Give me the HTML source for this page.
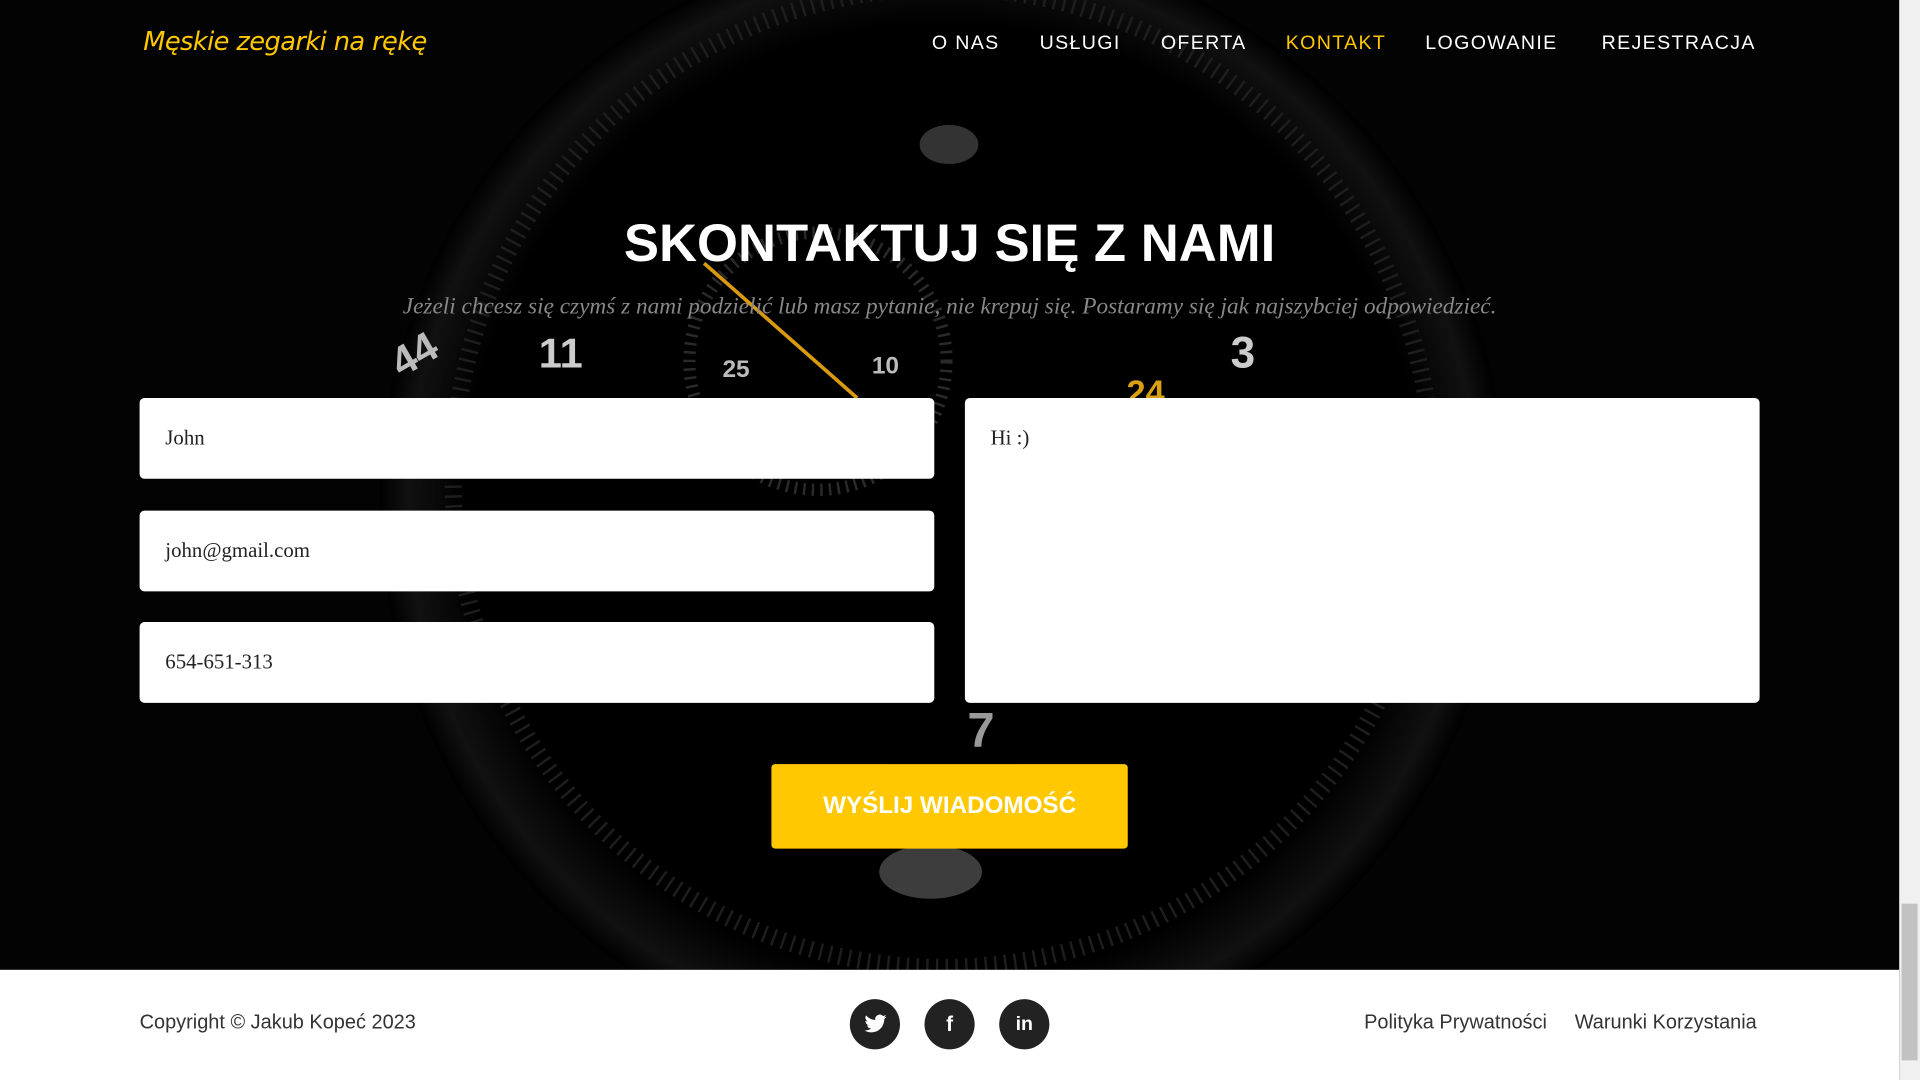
<!DOCTYPE html>
<html><head><meta charset="utf-8">
<style>
html,body{margin:0;padding:0;width:1920px;height:1080px;overflow:hidden;background:#000}
#w{width:1568px;height:882px;transform:scale(1.22449);transform-origin:0 0;position:relative;font-family:"Liberation Sans",sans-serif}
.hero{position:absolute;left:0;top:0;width:1551px;height:792px;background:#030303;overflow:hidden}
.sb{position:absolute;left:1551px;top:0;width:17px;height:882px;background:#f0f0f0}
.sb .th{position:absolute;left:2px;top:738px;width:13px;height:128px;background:#c2c2c2}
.logo{position:absolute;left:117px;top:22px;color:#ffc800;font-family:"Comic Sans MS","DejaVu Sans",cursive;font-style:italic;font-size:21px;letter-spacing:-0.5px}
.nav{position:absolute;top:27px;font-size:16px;color:#fff;letter-spacing:1.1px}
h1{position:absolute;left:0;width:1551px;top:175px;margin:0;text-align:center;color:#fff;font-size:43px;font-weight:bold}
.sub{position:absolute;left:0;width:1551px;top:240px;text-align:center;color:#888;font-family:"Liberation Serif",serif;font-style:italic;font-size:19px}
.in{position:absolute;background:#fff;border-radius:4px;font-family:"Liberation Serif",serif;font-size:17px;color:#222;box-sizing:border-box;padding-left:21px}
.btn{position:absolute;left:630px;top:624px;width:291px;height:69px;background:#ffc800;border-radius:3px;color:#fff;font-weight:bold;font-size:19.8px;text-align:center;line-height:69px}
.foot{position:absolute;left:0;top:792px;width:1551px;height:90px;background:#fff;color:#333;font-size:16.3px}
.ic{position:absolute;top:24px;width:41px;height:41px;border-radius:50%;background:#222;color:#fff;text-align:center;line-height:41px;font-weight:bold;font-size:17px}
</style></head><body><div id="w">
<div class="hero">
<svg width="1551" height="792" style="position:absolute;left:0;top:0">
<defs><radialGradient id="g" cx="50%" cy="50%" r="50%"><stop offset="0.85" stop-color="#000"/><stop offset="0.95" stop-color="#111"/><stop offset="1" stop-color="#000"/></radialGradient></defs>
<circle cx="770" cy="410" r="460" fill="url(#g)"/>
<circle cx="770" cy="390" r="400" fill="none" stroke="#1e1e1e" stroke-width="14" stroke-dasharray="2 6"/>
<circle cx="668" cy="295" r="105" fill="none" stroke="#2a2a2a" stroke-width="10" stroke-dasharray="2 5"/>
<ellipse cx="775" cy="118" rx="24" ry="16" fill="#666" opacity=".5"/>
<ellipse cx="760" cy="712" rx="42" ry="22" fill="#888" opacity=".45"/>
<line x1="575" y1="215" x2="700" y2="325" stroke="#d99a10" stroke-width="3"/>
<text x="320" y="300" fill="#bbb" font-size="34" font-weight="bold" transform="rotate(-30 340 290)">44</text>
<text x="440" y="300" fill="#ccc" font-size="34" font-weight="bold">11</text>
<text x="1005" y="300" fill="#ccc" font-size="36" font-weight="bold">3</text>
<text x="920" y="330" fill="#d9a014" font-size="28" font-weight="bold">24</text>
<text x="590" y="308" fill="#bbb" font-size="20" font-weight="bold">25</text>
<text x="712" y="305" fill="#bbb" font-size="20" font-weight="bold">10</text>
<text x="790" y="610" fill="#999" font-size="40" font-weight="bold">7</text>
</svg>
<div class="logo">Męskie zegarki na rękę</div>
<div class="nav" style="left:761px">O NAS</div>
<div class="nav" style="left:849px">USŁUGI</div>
<div class="nav" style="left:948px">OFERTA</div>
<div class="nav" style="left:1050px;color:#ffc800">KONTAKT</div>
<div class="nav" style="left:1164px">LOGOWANIE</div>
<div class="nav" style="left:1308px">REJESTRACJA</div>
<h1>SKONTAKTUJ SIĘ Z NAMI</h1>
<div class="sub">Jeżeli chcesz się czymś z nami podzielić lub masz pytanie, nie krepuj się. Postaramy się jak najszybciej odpowiedzieć.</div>
<div class="in" style="left:114px;top:325px;width:649px;height:66px;line-height:66px">John</div>
<div class="in" style="left:114px;top:417px;width:649px;height:66px;line-height:66px">john@gmail.com</div>
<div class="in" style="left:114px;top:508px;width:649px;height:66px;line-height:66px">654-651-313</div>
<div class="in" style="left:788px;top:325px;width:649px;height:249px;padding-top:23px">Hi :)</div>
<div class="btn">WYŚLIJ WIADOMOŚĆ</div>
</div>
<div class="foot">
<div style="position:absolute;left:114px;top:34px">Copyright © Jakub Kopeć 2023</div>
<div class="ic" style="left:694px"><svg width="18" height="16" viewBox="0 0 24 20" style="margin-top:12px"><path fill="#fff" d="M24 2.4a10 10 0 0 1-2.8.8A5 5 0 0 0 23.3.5a10 10 0 0 1-3.1 1.2A4.9 4.9 0 0 0 11.8 6 14 14 0 0 1 1.7.9a4.9 4.9 0 0 0 1.5 6.6A4.9 4.9 0 0 1 1 6.9 4.9 4.9 0 0 0 4.9 11.8a5 5 0 0 1-2.2.1 4.9 4.9 0 0 0 4.6 3.4A9.9 9.9 0 0 1 0 17.3 14 14 0 0 0 7.5 19.5c9 0 14-7.5 14-14v-.6A10 10 0 0 0 24 2.4z"/></svg></div>
<div class="ic" style="left:755px">f</div>
<div class="ic" style="left:816px;font-size:16px">in</div>
<div style="position:absolute;left:1114px;top:34px">Polityka Prywatności</div>
<div style="position:absolute;left:1286px;top:34px">Warunki Korzystania</div>
</div>
<div class="sb"><div class="th"></div></div>
</div></body></html>
